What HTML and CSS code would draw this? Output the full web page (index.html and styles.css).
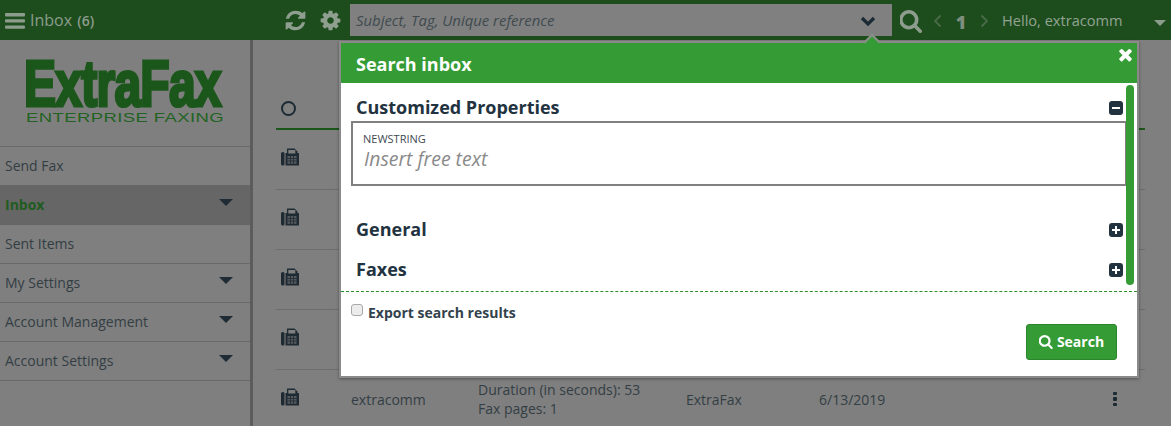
FILE: index.html
```html
<!DOCTYPE html>
<html lang="en">
<head>
<meta charset="utf-8">
<title>ExtraFax Inbox</title>
<link rel="stylesheet" href="styles.css">
</head>
<body>
<div class="app">
  <header class="topbar">
    <svg class="bars" viewBox="0 0 20 16"><rect width="20" height="3.4" rx="1"/><rect y="6.2" width="20" height="3.4" rx="1"/><rect y="12.4" width="20" height="3.4" rx="1"/></svg>
    <div class="title">Inbox <span class="count">(6)</span></div>
    <div class="spacer"></div>
    <svg class="ico refresh" viewBox="0 0 1792 1792"><path d="M1639 1056q0 5-1 7-64 268-268 434.5t-478 166.5q-146 0-282.5-55t-243.5-157l-129 129q-19 19-45 19t-45-19-19-45v-448q0-26 19-45t45-19h448q26 0 45 19t19 45-19 45l-137 137q71 66 161 102t187 36q134 0 250-65t186-179q11-17 53-117 8-23 30-23h192q13 0 22.5 9.5t9.5 22.5zm25-800v448q0 26-19 45t-45 19h-448q-26 0-45-19t-19-45 19-45l138-138q-148-137-349-137-134 0-250 65t-186 179q-11 17-53 117-8 23-30 23h-199q-13 0-22.5-9.5t-9.5-22.5v-7q65-268 270-434.5t480-166.5q146 0 284 55.5t245 156.5l130-129q19-19 45-19t45 19 19 45z"/></svg>
    <svg class="ico cog" viewBox="0 0 1792 1792"><path d="M1152 896q0-106-75-181t-181-75-181 75-75 181 75 181 181 75 181-75 75-181zm512-109v222q0 12-8 23t-20 13l-185 28q-19 54-39 91 35 50 107 138 10 12 10 25t-9 23q-27 37-99 108t-94 71q-12 0-26-9l-138-108q-44 23-91 38-16 136-29 186-7 28-36 28h-222q-14 0-24.5-8.5t-11.5-21.5l-28-184q-49-16-90-37l-141 107q-10 9-25 9-14 0-25-11-126-114-165-168-7-10-7-23 0-12 8-23 15-21 51-66.5t54-70.5q-27-50-41-99l-183-27q-13-2-21-12.5t-8-23.5v-222q0-12 8-23t19-13l186-28q14-46 39-92-40-57-107-138-10-12-10-24 0-10 9-23 26-36 98.5-107.5t94.5-71.5q13 0 26 10l138 107q44-23 91-38 16-136 29-186 7-28 36-28h222q14 0 24.5 8.5t11.5 21.5l28 184q49 16 90 37l142-107q9-9 24-9 13 0 25 10 129 119 165 170 7 8 7 22 0 12-8 23-15 21-51 66.5t-54 70.5q26 50 41 98l183 28q13 2 21 12.5t8 23.5z"/></svg>
    <div class="searchbox">
      <span class="ph">Subject, Tag, Unique reference</span>
      <svg class="chev" viewBox="0 0 16 11"><path d="M2 2l6 6 6-6" fill="none" stroke-width="3.2"/></svg>
    </div>
    <svg class="ico mag" viewBox="128 128 1600 1664"><path d="M1216 832q0-185-131.5-316.5t-316.5-131.5-316.5 131.5-131.5 316.5 131.5 316.5 316.5 131.5 316.5-131.5 131.5-316.5zm512 832q0 52-38 90t-90 38q-54 0-90-38l-343-342q-179 124-399 124-143 0-273.5-55.5t-225-150-150-225-55.5-273.5 55.5-273.5 150-225 225-150 273.5-55.5 273.5 55.5 225 150 150 225 55.5 273.5q0 220-124 399l343 343q37 37 37 90z"/></svg>
    <svg class="pager" viewBox="0 0 9 14"><path d="M7.5 1.5L2 7l5.500 5.500" fill="none" stroke-width="1.800"/></svg>
    <span class="page">1</span>
    <svg class="pager" viewBox="0 0 9 14"><path d="M1.500 1.500L7 7l-5.500 5.500" fill="none" stroke-width="1.800"/></svg>
    <span class="hello">Hello, extracomm</span>
    <span class="usercaret"></span>
  </header>

  <div class="content">
    <aside class="sidebar">
      <div class="logo">
        <div class="logo-main">ExtraFax</div>
        <div class="logo-sub">ENTERPRISE FAXING</div>
      </div>
      <nav class="menu">
        <a class="item">Send Fax</a>
        <a class="item active">Inbox<i class="caret"></i></a>
        <a class="item">Sent Items</a>
        <a class="item">My Settings<i class="caret"></i></a>
        <a class="item">Account Management<i class="caret"></i></a>
        <a class="item">Account Settings<i class="caret"></i></a>
      </nav>
    </aside>

    <main class="main">
      <div class="thead"><span class="circle"></span></div>
      <div class="row"><svg class="fax" viewBox="0 0 18 18"><use href="#faxicon"/></svg></div>
      <div class="row"><svg class="fax" viewBox="0 0 18 18"><use href="#faxicon"/></svg></div>
      <div class="row"><svg class="fax" viewBox="0 0 18 18"><use href="#faxicon"/></svg></div>
      <div class="row"><svg class="fax" viewBox="0 0 18 18"><use href="#faxicon"/></svg></div>
      <div class="row last">
        <svg class="fax" viewBox="0 0 18 18"><use href="#faxicon"/></svg>
        <span class="c-user">extracomm</span>
        <span class="c-info">Duration (in seconds): 53<br>Fax pages: 1</span>
        <span class="c-from">ExtraFax</span>
        <span class="c-date">6/13/2019</span>
        <span class="kebab"><i></i><i></i><i></i></span>
      </div>
    </main>
  </div>

  <span class="notch"></span>
  <section class="modal">
    <div class="modal-head">
      <h2>Search inbox</h2>
      <svg class="close" viewBox="0 0 1792 1792"><path d="M1490 1322q0 40-28 68l-136 136q-28 28-68 28t-68-28l-294-294-294 294q-28 28-68 28t-68-28l-136-136q-28-28-28-68t28-68l294-294-294-294q-28-28-28-68t28-68l136-136q28-28 68-28t68 28l294 294 294-294q28-28 68-28t68 28l136 136q28 28 28 68t-28 68l-294 294 294 294q28 28 28 68z"/></svg>
    </div>
    <div class="modal-body">
      <div class="sect"><h3>Customized Properties</h3><span class="tog minus"></span></div>
      <div class="field">
        <div class="field-label">NEWSTRING</div>
        <div class="field-ph">Insert free text</div>
      </div>
      <div class="sect general"><h3>General</h3><span class="tog plus"></span></div>
      <div class="sect faxes"><h3>Faxes</h3><span class="tog plus"></span></div>
      <span class="scroll"></span>
    </div>
    <div class="modal-foot">
      <label class="export"><input type="checkbox"><span>Export search results</span></label>
      <button class="btn" type="button">
        <svg viewBox="128 128 1600 1664"><path d="M1216 832q0-185-131.5-316.5t-316.5-131.5-316.5 131.5-131.5 316.5 131.5 316.5 316.5 131.5 316.5-131.5 131.5-316.5zm512 832q0 52-38 90t-90 38q-54 0-90-38l-343-342q-179 124-399 124-143 0-273.5-55.5t-225-150-150-225-55.5-273.5 55.5-273.5 150-225 225-150 273.5-55.5 273.5 55.5 225 150 150 225 55.5 273.5q0 220-124 399l343 343q37 37 37 90z"/></svg>
        Search
      </button>
    </div>
  </section>
</div>

<svg class="defs" width="0" height="0">
  <symbol id="faxicon" viewBox="0 0 18 18">
    <rect x="0" y="4" width="3.500" height="13.500" rx="1.500" fill="#1f2b33"/>
    <path d="M4.500 5h1.500V0.500h7.500l3 3V5h1a.5.5 0 0 1 .5.500V17a.5.5 0 0 1-.5.500H5a.5.5 0 0 1-.5-.500z" fill="#1f2b33"/>
    <rect x="7.300" y="2" width="7" height="3.500" fill="#7f7f7f"/>
    <rect x="6.500" y="8" width="9" height="7.800" fill="#55595c"/>
    <path d="M6.500 10.500h9M6.500 13h9M9.500 8v8M12.500 8v8" stroke="#1f2b33" stroke-width=".8"/>
  </symbol>
</svg>
</body>
</html>
```

FILE: styles.css
```css
* { box-sizing: border-box; }
html, body { margin: 0; padding: 0; height: 100%; overflow: hidden; }
body { font-family: "Open Sans", sans-serif; font-size: 14px; color: #303b42; background: #7f7f7f; }
.defs { position: absolute; }

.app { position: relative; width: 1171px; height: 426px; overflow: hidden; display: flex; flex-direction: column; }

/* top bar */
.topbar { flex: none; height: 40px; background: #1d4d1d; display: flex; align-items: center; padding-left: 5px; color: #8c9c8c; fill: #8f9f8f; }
.bars { width: 20px; height: 16px; margin: 1px 5px 0 0; fill: #8d9d8d; }
.title { font-size: 16px; color: #8c9c8c; }
.count { font-size: 14px; font-weight: 600; margin-left: 1px; }
.spacer { flex: 1; }
.ico { display: block; }
.refresh { width: 23px; height: 23px; margin-right: 12px; }
.cog { width: 23px; height: 23px; margin-right: 8px; }
.searchbox { width: 542px; height: 32px; background: #808080; display: flex; align-items: center; justify-content: space-between; padding: 0 16px 0 6px; }
.ph { font-style: italic; font-size: 14.9px; color: #3f4a4f; }
.chev { width: 16px; height: 11px; stroke: #1c2a33; margin-top: 2px; }
.mag { width: 22px; height: 23px; margin: 2px 11px 0 8px; fill: #8d9c8d; }
.pager { flex: none; width: 9px; height: 14px; stroke: #4a6a4a; margin-top: 2px; }
.page { width: 38px; text-align: center; font-size: 18px; font-weight: 800; color: #7f8f7f; line-height: 1; margin-top: 4px; }
.hello { margin-left: 13px; width: 152px; font-size: 14.6px; color: #93a393; white-space: nowrap; }
.usercaret { flex: none; width: 0; height: 0; margin: 6px 5px 0 0; border-left: 6px solid transparent; border-right: 6px solid transparent; border-top: 6px solid #8d9d8d; }

/* page under the overlay */
.content { flex: 1; display: flex; min-height: 0; }
.sidebar { flex: none; width: 253px; border-right: 3px solid #5c5c5c; }
.logo { height: 107px; padding: 21px 0 0 25px; border-bottom: 1px solid #6a6a6a; color: #1b561b; overflow: hidden; }
.logo-main { font-family: "Liberation Sans", sans-serif; font-weight: 700; font-size: 64px; line-height: 47px; width: 200px; letter-spacing: -1px; white-space: nowrap; transform-origin: 0 0; transform: translateX(-1px) scaleX(0.75); -webkit-text-stroke: 3.2px #1b561b; }
.logo-sub { font-family: "Liberation Sans", sans-serif; font-size: 13px; line-height: 12px; margin: 4px 0 0 1px; white-space: nowrap; letter-spacing: 0.3px; color: #226322; transform-origin: 0 0; transform: scaleX(1.42); }
.item { display: flex; align-items: center; justify-content: space-between; height: 39px; padding: 0 17px 2px 5px; border-bottom: 1px solid #696969; color: #333e44; font-size: 14px; }
.item.active { background: #666666; color: #1f5c1f; font-weight: 700; border-bottom-color: #666666; box-shadow: 0 -1px 0 #666666; }
.caret { width: 0; height: 0; margin-top: -3px; border-left: 7px solid transparent; border-right: 7px solid transparent; border-top: 7px solid #1f2c35; }

.main { flex: 1; min-width: 0; padding: 0 26px 0 23px; }
.thead { height: 90px; border-bottom: 2px solid #1b561b; padding: 61px 0 0 5px; }
.circle { display: block; width: 15px; height: 15px; border: 2px solid #1c2a33; border-radius: 50%; }
.row { position: relative; height: 60px; border-bottom: 1px solid #6d6d6d; display: flex; align-items: center; }
.row.last { border-bottom: 0; flex: none; padding-bottom: 2px; }
.fax { flex: none; width: 18px; height: 18px; margin: -5px 0 0 5px; }
.c-user { position: absolute; left: 75px; color: #333e44; }
.c-info { position: absolute; left: 202px; line-height: 19px; color: #333e44; }
.c-from { position: absolute; left: 410px; color: #333e44; }
.c-date { position: absolute; left: 543px; color: #333e44; }
.kebab { position: absolute; left: 837px; display: flex; flex-direction: column; gap: 2px; }
.kebab i { width: 4px; height: 3.600px; background: #1c2a33; border-radius: 1px; }

/* modal */
.notch { position: absolute; left: 866px; top: 35.500px; width: 12px; height: 12px; background: #359b35; border-top: 2px solid #8e8e8e; border-left: 2px solid #8e8e8e; transform: rotate(45deg); z-index: 3; }
.modal { position: absolute; left: 339px; top: 41px; width: 800px; height: 337px; background: #fff; border: 2px solid #8a8a8a; display: flex; flex-direction: column; box-shadow: 0 1px 3px rgba(0,0,0,.35); z-index: 2; }
.modal-head { position: relative; flex: none; height: 40px; background: #359b35; display: flex; align-items: center; padding-left: 15px; }
.modal-head h2 { margin: 1px 0 0; font-size: 18px; line-height: 24px; font-weight: 700; color: #fff; }
.close { position: absolute; right: 2.500px; top: 2px; width: 19px; height: 19px; fill: #fff; }
.modal-body { position: relative; flex: none; height: 209px; border-bottom: 1px dashed #2a8f2a; padding: 0 10px; }
.sect { display: flex; align-items: center; justify-content: space-between; height: 24px; padding: 0 4px 0 5px; }
.sect:first-child { margin-top: 12px; }
.sect h3 { margin: 0; font-size: 18px; line-height: 24px; font-weight: 700; color: #22333f; }
.sect.general { margin-top: 31px; }
.sect.faxes { margin-top: 16px; }
.tog { position: relative; display: block; width: 14px; height: 14px; margin-top: 1px; border-radius: 3px; background: #22333f; }
.tog::before { content: ""; position: absolute; left: 3px; top: 6px; width: 8px; height: 2px; background: #fff; }
.plus::after { content: ""; position: absolute; left: 6px; top: 3px; width: 2px; height: 8px; background: #fff; }
.field { height: 65px; margin-top: 2px; border: 2px solid #808080; padding: 9px 10px; }
.field-label { font-size: 11px; line-height: 14px; color: #3f4a50; }
.field-ph { font-style: italic; font-size: 19.4px; line-height: 26px; color: #8a8a8a; margin: 0 0 0 1px; }
.scroll { position: absolute; right: 3px; top: 2px; width: 8px; height: 200px; background: #359b35; border-radius: 4px; }
.modal-foot { flex: 1; display: flex; flex-direction: column; padding: 0 20px 0 10px; }
.export { display: flex; align-items: center; height: 16px; margin-top: 12px; }
.export input { appearance: none; width: 12px; height: 12px; margin: -4px 5px 0 0; background: #ececec; border: 1px solid #a8a8a8; border-radius: 3px; }
.export span { font-size: 14px; font-weight: 700; color: #33424c; }
.btn { align-self: flex-end; display: flex; align-items: center; justify-content: center; gap: 4px; width: 91px; height: 36px; margin-top: 4px; padding: 0 0 2px; background: #359b35; border: 1px solid #2c862c; border-radius: 3px; color: #fff; font-family: "Open Sans", sans-serif; font-size: 14px; font-weight: 700; }
.btn svg { width: 14px; height: 14px; margin-top: 2px; fill: #fff; }
```
